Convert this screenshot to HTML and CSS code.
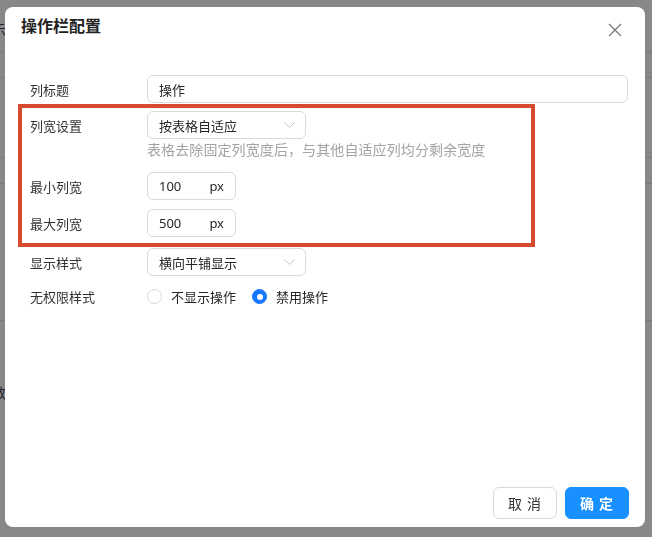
FILE: index.html
```html
<!DOCTYPE html>
<html lang="zh">
<head>
<meta charset="utf-8">
<title>操作栏配置</title>
<link rel="stylesheet" href="styles.css">
</head>
<body>
<div class="page">
  <div class="prow r1"><div class="cell"><span>显示</span></div></div>
  <div class="prow r2"></div>
  <div class="prow r3"></div>
  <div class="prow r4"></div>
  <div class="prow r5"></div>
  <div class="prow r6"><div class="cell"><span>参数</span></div></div>
</div>

<div class="modal">
  <div class="header">
    <div class="title">操作栏配置</div>
    <svg class="close" width="14" height="14" viewBox="0 0 14 14"><path d="M1 1L13 13M13 1L1 13" stroke="#7a7a7a" stroke-width="1.3" fill="none"/></svg>
  </div>

  <div class="body">
    <div class="row row-1">
      <div class="label">列标题</div>
      <div class="input wide">操作</div>
    </div>
    <div class="row row-2">
      <div class="label">列宽设置</div>
      <div class="control">
        <div class="select">
          <span>按表格自适应</span>
          <svg width="11" height="6" viewBox="0 0 11 6"><path d="M0.5 0.5L5.5 5.5L10.5 0.5" stroke="#c4c4c4" stroke-width="1" fill="none"/></svg>
        </div>
        <div class="help">表格去除固定列宽度后，与其他自适应列均分剩余宽度</div>
      </div>
    </div>
    <div class="row row-3">
      <div class="label">最小列宽</div>
      <div class="input num"><span>100</span><span>px</span></div>
    </div>
    <div class="row row-4">
      <div class="label">最大列宽</div>
      <div class="input num"><span>500</span><span>px</span></div>
    </div>
    <div class="row row-5">
      <div class="label">显示样式</div>
      <div class="select">
        <span>横向平铺显示</span>
        <svg width="11" height="6" viewBox="0 0 11 6"><path d="M0.5 0.5L5.5 5.5L10.5 0.5" stroke="#c4c4c4" stroke-width="1" fill="none"/></svg>
      </div>
    </div>
    <div class="row row-6">
      <div class="label">无权限样式</div>
      <div class="radios">
        <label class="radio"><span class="dot"></span>不显示操作</label>
        <label class="radio on"><span class="dot"></span>禁用操作</label>
      </div>
    </div>
  </div>

  <div class="footer">
    <button class="btn">取 消</button>
    <button class="btn primary">确 定</button>
  </div>

  <div class="annot"></div>
</div>
</body>
</html>
```

FILE: styles.css
```css
* { box-sizing: border-box; }
html, body { margin: 0; padding: 0; }
body {
  width: 652px;
  height: 537px;
  overflow: hidden;
  background: #888888;
  font-family: "Noto Sans", "Noto Sans CJK SC", sans-serif;
}

.page { width: 652px; }
.prow { border-bottom: 1px solid #7a7a7a; }
.r1 { height: 52px; padding-top: 20px; }
.r2 { height: 26px; }
.r3 { height: 80px; }
.r4 { height: 26px; }
.r5 { height: 137px; }
.r6 { border-bottom: none; padding-top: 62px; }
.cell {
  width: 6px;
  overflow: hidden;
  white-space: nowrap;
  font-size: 14px;
  line-height: 20px;
  color: #1f1f2a;
}
.cell span { display: inline-block; margin-left: -22px; }

.modal {
  position: fixed;
  left: 5px;
  top: 7px;
  width: 640px;
  height: 520px;
  background: #ffffff;
  border-radius: 8px;
  display: flex;
  flex-direction: column;
}

.header {
  display: flex;
  align-items: flex-start;
  padding: 8px 16px 0 16px;
}
.title {
  flex: 1;
  font-size: 16px;
  line-height: 22px;
  font-weight: 700;
  color: #222222;
}
.close { margin-top: 8px; margin-right: 7px; }

.body { padding: 38px 0 0 25px; }
.row { display: flex; align-items: flex-start; }
.row-1 { margin-bottom: 8px; }
.row-2 { margin-bottom: 11px; }
.row-3 { margin-bottom: 9px; }
.row-4 { margin-bottom: 11px; }
.row-5 { margin-bottom: 6px; }

.label {
  width: 117px;
  flex: none;
  font-size: 13px;
  height: 28px;
  line-height: 25px;
  padding-top: 3px;
  color: #333333;
}

.input, .select {
  height: 28px;
  border: 1px solid #d9d9d9;
  border-radius: 6px;
  font-size: 13px;
  color: #262626;
  display: flex;
  align-items: center;
  padding: 0 11px;
}
.wide { width: 481px; }
.num { width: 89px; justify-content: space-between; }
.select { width: 159px; justify-content: space-between; padding-right: 10px; }

.help {
  font-size: 14px;
  line-height: 22px;
  letter-spacing: 0.1px;
  color: #a3a3a3;
}

.radios {
  display: flex;
  align-items: center;
  height: 28px;
  gap: 16px;
}
.radio {
  display: flex;
  align-items: center;
  gap: 9px;
  font-size: 13px;
  color: #262626;
  padding-top: 1px;
}
.dot {
  width: 15px;
  height: 15px;
  border: 1px solid #d9d9d9;
  border-radius: 50%;
  background: #fff;
  display: flex;
  align-items: center;
  justify-content: center;
}
.radio.on .dot { background: #1677ff; border-color: #1677ff; }
.radio.on .dot::after {
  content: "";
  width: 6px;
  height: 6px;
  border-radius: 50%;
  background: #fff;
}

.footer {
  margin-top: auto;
  display: flex;
  justify-content: flex-end;
  gap: 8px;
  padding: 0 16px 8px 16px;
}
.btn {
  width: 64px;
  height: 32px;
  border-radius: 6px;
  border: 1px solid #d9d9d9;
  background: #fff;
  font-family: "Noto Sans CJK SC", sans-serif;
  font-size: 14px;
  color: #333;
  letter-spacing: 1px;
}
.btn.primary {
  background: #1890ff;
  border-color: #1890ff;
  color: #fff;
  font-weight: 700;
}

.annot {
  position: absolute;
  left: 13px;
  top: 97px;
  width: 517px;
  height: 143px;
  border: 4px solid #d64a2f;
  pointer-events: none;
}
```
